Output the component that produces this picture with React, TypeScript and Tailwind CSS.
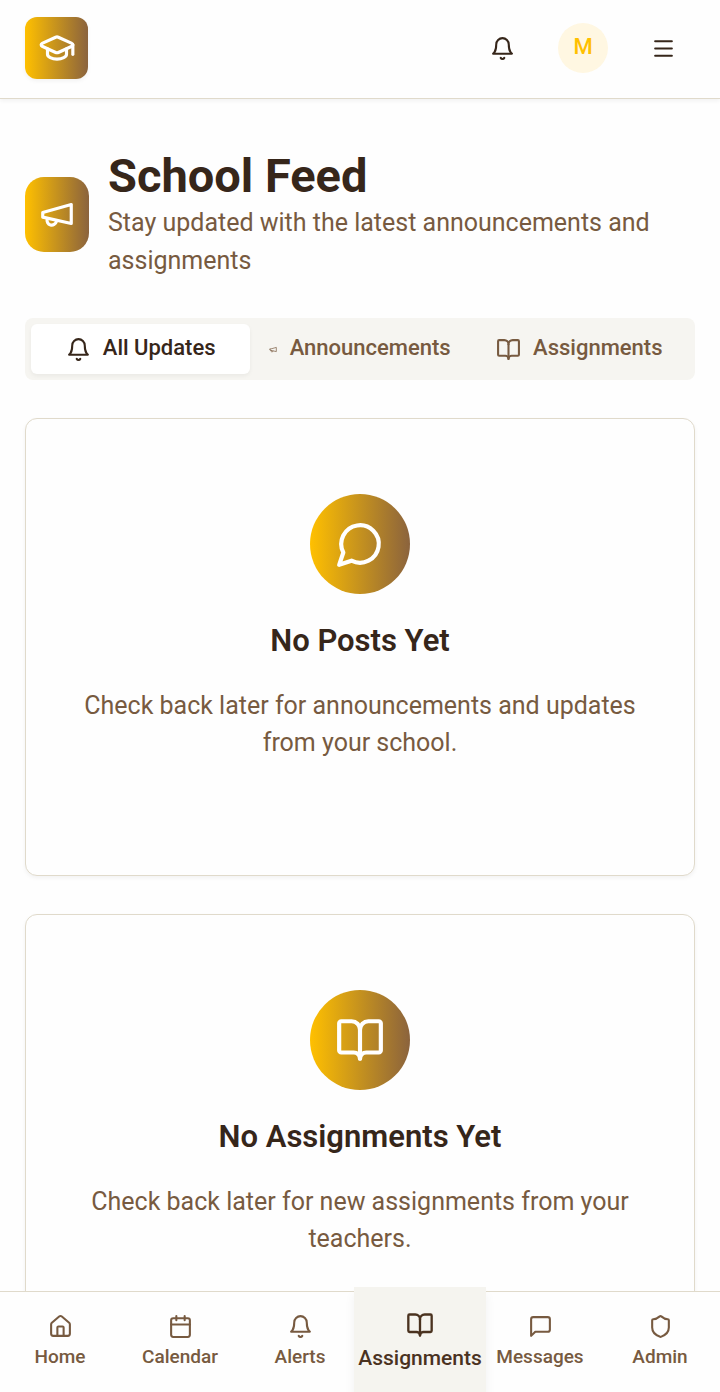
import type { ReactNode } from "react";
import { BookOpen, Calendar, GraduationCap, Menu, Shield, House } from "lucide-react";

type IconProps = { className?: string };

function Stroke({ className = "", children }: IconProps & { children: ReactNode }) {
  return (
    <svg
      viewBox="0 0 24 24"
      fill="none"
      stroke="currentColor"
      strokeWidth="2"
      strokeLinecap="round"
      strokeLinejoin="round"
      aria-hidden="true"
      className={className}
    >
      {children}
    </svg>
  );
}

function Bell({ className }: IconProps) {
  return (
    <Stroke className={className}>
      <path d="M6 8a6 6 0 0 1 12 0c0 7 3 9 3 9H3s3-2 3-9" />
      <path d="M10.3 21a1.94 1.94 0 0 0 3.4 0" />
    </Stroke>
  );
}

function Megaphone({ className }: IconProps) {
  return (
    <Stroke className={className}>
      <path d="m3 11 18-5v12L3 14v-3z" />
      <path d="M11.6 16.8a3 3 0 1 1-5.8-1.6" />
    </Stroke>
  );
}

function MessageCircle({ className }: IconProps) {
  return (
    <Stroke className={className}>
      <path d="M7.9 20A9 9 0 1 0 4 16.1L2 22Z" />
    </Stroke>
  );
}

function MessageSquare({ className }: IconProps) {
  return (
    <Stroke className={className}>
      <path d="M21 15a2 2 0 0 1-2 2H7l-4 4V5a2 2 0 0 1 2-2h14a2 2 0 0 1 2 2z" />
    </Stroke>
  );
}

function EmptyCard({ icon, title, text }: { icon: ReactNode; title: string; text: string }) {
  return (
    <section className="flex flex-col items-center rounded-xl border border-[#e0dacb] bg-[#fefefe] px-[38px] pt-[75px] pb-[114px] text-center shadow-[0_2px_4px_rgba(0,0,0,0.05)]">
      <div className="flex size-[100px] items-center justify-center rounded-full bg-linear-to-r/srgb from-[#ffc000] to-[#8b633d] text-white">
        {icon}
      </div>
      <h3 className="mt-[25px] text-[31px] leading-[44px] font-semibold text-[#36261a]">{title}</h3>
      <p className="mt-[24px] text-[25px] leading-[37px] text-[#775a40]">{text}</p>
    </section>
  );
}

const tabs = [
  { label: "All Updates", Icon: Bell, active: true },
  { label: "Announcements", Icon: Megaphone, active: false },
  { label: "Assignments", Icon: BookOpen, active: false },
];

const navItems = [
  { label: "Home", Icon: House, active: false },
  { label: "Calendar", Icon: Calendar, active: false },
  { label: "Alerts", Icon: Bell, active: false },
  { label: "Assignments", Icon: BookOpen, active: true },
  { label: "Messages", Icon: MessageSquare, active: false },
  { label: "Admin", Icon: Shield, active: false },
];

export default function App() {
  return (
    <div className="h-screen overflow-hidden bg-[#fefefe] font-['Roboto',sans-serif] text-[#36261a]">
      <div className="flex h-full flex-col">
        <header className="z-10 flex shrink-0 items-center justify-between border-b border-[#e0dacb] bg-[#fefefe] px-[25px] pt-[17px] pb-[19px] shadow-[0_2px_4px_rgba(0,0,0,0.05)]">
          <a
            href="#home"
            aria-label="School home"
            className="flex h-[62px] w-[63px] items-center justify-center rounded-xl bg-linear-to-r/srgb from-[#ffc000] to-[#8b633d] text-white shadow-[0_2px_4px_rgba(0,0,0,0.05)]"
          >
            <GraduationCap className="size-[38px]" />
          </a>
          <div className="flex items-center gap-6">
            <button type="button" aria-label="Notifications" className="flex h-[62px] w-[63px] items-center justify-center">
              <Bell className="size-[25px]" />
            </button>
            <button
              type="button"
              aria-label="Account"
              className="flex size-[50px] items-center justify-center rounded-full bg-[#fff7e2] pb-1 text-[22px] font-medium text-[#ffc000]"
            >
              M
            </button>
            <button type="button" aria-label="Menu" className="flex h-[62px] w-[63px] items-center justify-center">
              <Menu className="size-[25px]" />
            </button>
          </div>
        </header>

        <main className="flex min-h-0 flex-1 flex-col gap-[38px] overflow-hidden px-[25px] pt-[49px]">
          <div className="flex shrink-0 items-center gap-[19px]">
            <div className="flex h-[75px] w-16 shrink-0 items-center justify-center rounded-[19px] bg-linear-to-r/srgb from-[#ffc000] to-[#8b633d] text-white">
              <Megaphone className="size-[38px]" />
            </div>
            <div>
              <h1 className="text-[47px] leading-[56px] font-bold">School Feed</h1>
              <p className="text-[25px] leading-[38px] text-[#775a40]">
                Stay updated with the latest announcements and assignments
              </p>
            </div>
          </div>

          <div role="tablist" className="grid shrink-0 grid-cols-3 rounded-lg bg-[#f6f5f1] p-[6px]">
            {tabs.map(({ label, Icon, active }) => (
              <button
                key={label}
                type="button"
                role="tab"
                aria-selected={active}
                className={`flex h-[50px] min-w-0 items-center justify-center gap-3 rounded-md px-[19px] text-[22px] font-medium ${
                  active ? "bg-white text-[#36261a] shadow-[0_2px_4px_rgba(0,0,0,0.05)]" : "text-[#775a40]"
                }`}
              >
                <Icon className="h-[25px] w-[25px] min-w-0" />
                <span className="pb-1">{label}</span>
              </button>
            ))}
          </div>

          <div className="flex shrink-0 flex-col gap-[38px]">
            <EmptyCard
              icon={<MessageCircle className="size-[50px]" />}
              title="No Posts Yet"
              text="Check back later for announcements and updates from your school."
            />
            <EmptyCard
              icon={<BookOpen className="size-[50px]" />}
              title="No Assignments Yet"
              text="Check back later for new assignments from your teachers."
            />
          </div>
        </main>

        <nav
          aria-label="Main"
          className="z-10 grid h-[101px] shrink-0 grid-cols-6 border-t border-[#e0dacb] bg-[#fefefe]"
        >
          {navItems.map(({ label, Icon, active }) => (
            <a
              key={label}
              href={`#${label.toLowerCase()}`}
              aria-current={active ? "page" : undefined}
              className={`flex flex-col items-center font-medium ${
                active
                  ? "-mx-[6px] -mt-[5px] bg-[#f5f4ef] pt-[24px] text-[21px] text-[#4a321f] shadow-[0_8px_10px_rgba(0,0,0,0.06)]"
                  : "pt-[22px] text-[19px] text-[#775a40]"
              }`}
            >
              <Icon className={active ? "size-[28px]" : "size-[25px]"} />
              <span className={active ? "mt-[5px] leading-[28px]" : "mt-[5px] leading-[25px]"}>{label}</span>
            </a>
          ))}
        </nav>
      </div>
    </div>
  );
}
